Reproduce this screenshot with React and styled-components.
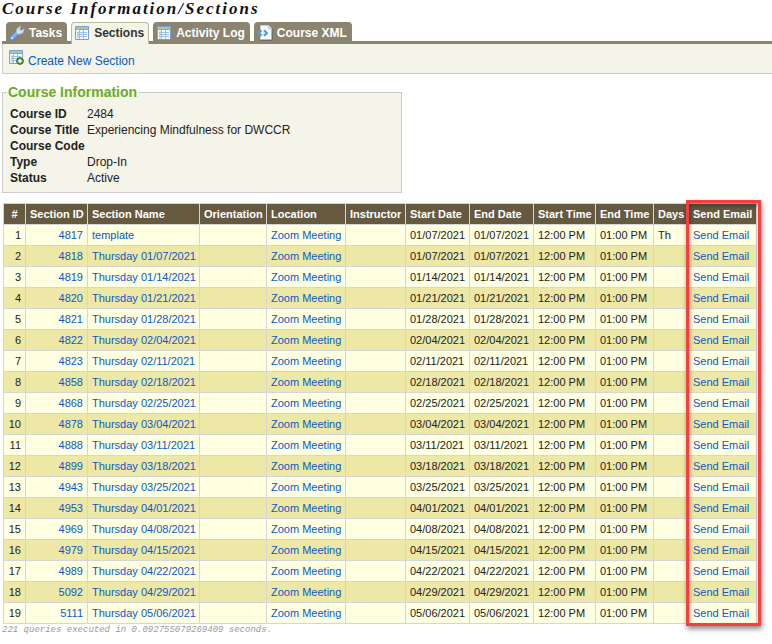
import React from 'react';
import styled, { createGlobalStyle } from 'styled-components';

const tabs = [
  { id: 'tasks', label: 'Tasks', icon: 'wrench' },
  { id: 'sections', label: 'Sections', icon: 'table', active: true },
  { id: 'log', label: 'Activity Log', icon: 'table' },
  { id: 'xml', label: 'Course XML', icon: 'xml' },
];

const courseInfo = [
  ['Course ID', '2484'],
  ['Course Title', 'Experiencing Mindfulness for DWCCR'],
  ['Course Code', ''],
  ['Type', 'Drop-In'],
  ['Status', 'Active'],
];

const columns = [
  { label: '#', width: 22, align: 'center' },
  { label: 'Section ID', width: 62 },
  { label: 'Section Name', width: 112 },
  { label: 'Orientation', width: 67 },
  { label: 'Location', width: 79 },
  { label: 'Instructor', width: 60 },
  { label: 'Start Date', width: 64 },
  { label: 'End Date', width: 64 },
  { label: 'Start Time', width: 62 },
  { label: 'End Time', width: 58 },
  { label: 'Days', width: 35 },
  { label: 'Send Email', width: 68 },
];
const tableWidth = columns.reduce((sum, column) => sum + column.width, 1);

const sections = [
  { id: 4817, name: 'template', date: '01/07/2021', days: 'Th' },
  { id: 4818, date: '01/07/2021' },
  { id: 4819, date: '01/14/2021' },
  { id: 4820, date: '01/21/2021' },
  { id: 4821, date: '01/28/2021' },
  { id: 4822, date: '02/04/2021' },
  { id: 4823, date: '02/11/2021' },
  { id: 4858, date: '02/18/2021' },
  { id: 4868, date: '02/25/2021' },
  { id: 4878, date: '03/04/2021' },
  { id: 4888, date: '03/11/2021' },
  { id: 4899, date: '03/18/2021' },
  { id: 4943, date: '03/25/2021' },
  { id: 4953, date: '04/01/2021' },
  { id: 4969, date: '04/08/2021' },
  { id: 4979, date: '04/15/2021' },
  { id: 4989, date: '04/22/2021' },
  { id: 5092, date: '04/29/2021' },
  { id: 5111, date: '05/06/2021' },
];

const TableShape = () => (
  <>
    <path d="M1.5 1.5h13v13h-13z" fill="#f7fbff" stroke="#7c9fd3" />
    <path d="M2 2h12v2H2z" fill="#a4cba4" />
    <path d="M2 4h12v1H2z" fill="#7fa8d8" />
    <path d="M3 6h2v8H3z" fill="#d2e3f7" />
    <path
      d="M3 7.5h10M3 9.5h10M3 11.5h10M5.5 5v9M9.5 5v9"
      stroke="#9fbee6"
    />
  </>
);

const shapes = {
  table: <TableShape />,
  tableAdd: (
    <>
      <TableShape />
      <circle cx="12" cy="12" r="3.4" fill="#5b9a3b" stroke="#37752a" />
      <path d="M12 10v4M10 12h4" stroke="#fff" strokeWidth="1.4" />
    </>
  ),
  wrench: (
    <>
      <path
        d="M3 13 7.6 8.4"
        stroke="#4c80c8"
        strokeWidth="5"
        strokeLinecap="round"
      />
      <path
        d="M3 13 7.6 8.4"
        stroke="#86b2f2"
        strokeWidth="3.4"
        strokeLinecap="round"
      />
      <path
        d="M7 7.2 8 3.5 11.2 1l.7.5-1.2 2.4 1.4 1.5L14.7 4l.6.7-1.4 3.2-3.4 1.4-1.7.1z"
        fill="#d5e1ef"
        stroke="#8faad0"
        strokeWidth=".7"
      />
      <circle cx="3" cy="13" r=".8" fill="#fff" />
    </>
  ),
  xml: (
    <>
      <path d="M3.5.5h8l3 3v11h-11z" fill="#f8fafd" stroke="#c6ccd4" />
      <path d="M11.5.5v3h3" fill="#dce4ed" stroke="#b9c1cc" />
      <path d="M15.3 4v11.3H3" stroke="#66665c" />
      <path
        d="M4.5 5.2 1.7 8l2.8 2.8M7 5.2 9.8 8 7 10.8"
        stroke="#4b9aed"
        strokeWidth="2.2"
      />
    </>
  ),
};

const Icon = ({ name }) => (
  <StyledIcon viewBox="0 0 16 16" fill="none" aria-hidden="true">
    {shapes[name]}
  </StyledIcon>
);

const SectionRow = ({ section, number }) => (
  <tr>
    <Cell $align="right">{number}</Cell>
    <Cell $align="right">
      <Link href={`#section-${section.id}`}>{section.id}</Link>
    </Cell>
    <Cell>
      <Link href={`#section-${section.id}`}>
        {section.name || `Thursday ${section.date}`}
      </Link>
    </Cell>
    <Cell />
    <Cell>
      <Link href="#location">Zoom Meeting</Link>
    </Cell>
    <Cell />
    <Cell>{section.date}</Cell>
    <Cell>{section.date}</Cell>
    <Cell>12:00 PM</Cell>
    <Cell>01:00 PM</Cell>
    <Cell>{section.days}</Cell>
    <Cell>
      <Link href={`#email-${section.id}`}>Send Email</Link>
    </Cell>
  </tr>
);

const App = () => {
  return (
    <>
      <GlobalStyle />
      <Page>
        <Title>Course Information/Sections</Title>
        <TabBar>
          {tabs.map(tab => (
            <Tab
              key={tab.id}
              href={`#${tab.id}`}
              $active={tab.active}
              aria-current={tab.active ? 'page' : undefined}
            >
              <Icon name={tab.icon} />
              {tab.label}
            </Tab>
          ))}
        </TabBar>
        <Toolbar>
          <ToolLink href="#new-section">
            <Icon name="tableAdd" />
            <span>Create New Section</span>
          </ToolLink>
        </Toolbar>

        <InfoBox>
          <Legend>Course Information</Legend>
          <InfoList>
            {courseInfo.map(([label, value]) => (
              <React.Fragment key={label}>
                <dt>{label}</dt>
                <dd>{value}</dd>
              </React.Fragment>
            ))}
          </InfoList>
        </InfoBox>

        <TableWrap>
          <Table>
            <colgroup>
              {columns.map(column => (
                <Col key={column.label} $width={column.width} />
              ))}
            </colgroup>
            <thead>
              <tr>
                {columns.map(column => (
                  <HeadCell
                    key={column.label}
                    scope="col"
                    $align={column.align}
                  >
                    {column.label}
                  </HeadCell>
                ))}
              </tr>
            </thead>
            <tbody>
              {sections.map((section, index) => (
                <SectionRow
                  key={section.id}
                  section={section}
                  number={index + 1}
                />
              ))}
            </tbody>
          </Table>
          <Highlight />
        </TableWrap>
        <QueryInfo>221 queries executed in 0.092755079269409 seconds.</QueryInfo>
      </Page>
    </>
  );
};

const GlobalStyle = createGlobalStyle`
  * {
    box-sizing: border-box;
  }
  body {
    margin: 0;
    background-color: #ffffff;
    color: #222222;
    font-family: 'Liberation Sans', Arial, sans-serif;
    font-size: 12px;
  }
`;

const Page = styled.main`
  padding-left: 2px;
`;

const Title = styled.h1`
  margin: 0;
  padding-bottom: 4px;
  font-family: 'Liberation Serif', 'Times New Roman', serif;
  font-size: 17px;
  font-style: italic;
  line-height: 18px;
  letter-spacing: 2px;
  color: #111111;
`;

const StyledIcon = styled.svg`
  width: 16px;
  height: 16px;
  flex: none;
`;

const TabBar = styled.nav`
  display: flex;
  gap: 4px;
  padding-left: 4px;
  border-bottom: 3px solid #8b856f;
`;

const Tab = styled.a`
  display: flex;
  align-items: center;
  gap: 4px;
  height: ${props => (props.$active ? '22px' : '19px')};
  margin-bottom: ${props => (props.$active ? '-3px' : '0')};
  padding: 2px 4px ${props => (props.$active ? '3px' : '0')} 2px;
  border: 1px solid ${props => (props.$active ? '#b9bd96' : '#8b856f')};
  border-bottom: 0;
  border-radius: 4px 4px 0 0;
  background-color: ${props => (props.$active ? '#f4f4e8' : '#8b856f')};
  color: ${props => (props.$active ? '#333333' : '#ffffff')};
  font-size: 12px;
  font-weight: bold;
  text-decoration: none;
  white-space: nowrap;
`;

const Toolbar = styled.div`
  padding: 5px;
  height: 30px;
  border: 1px solid #cccccc;
  border-width: 0 0 1px 1px;
  background-color: #f4f4e8;
`;

const Link = styled.a`
  color: #0b59c9;
  text-decoration: none;
  &:hover {
    text-decoration: underline;
  }
`;

const ToolLink = styled(Link)`
  display: flex;
  gap: 4px;
  line-height: 24px;
`;

const InfoBox = styled.fieldset`
  max-width: 400px;
  margin: 10px 0 0;
  padding: 6px 7px;
  border: 1px solid #cccccc;
  background-color: #f4f4e8;
`;

const Legend = styled.legend`
  margin-left: -3px;
  padding: 0 2px 0 1px;
  color: #6aac2b;
  font-size: 14px;
  font-weight: bold;
  line-height: 16px;
`;

const InfoList = styled.dl`
  display: grid;
  grid-template-columns: 77px 1fr;
  margin: 0;
  line-height: 16px;

  dt {
    font-weight: bold;
    white-space: nowrap;
  }
  dd {
    min-height: 16px;
    margin: 0;
  }
`;

const TableWrap = styled.div`
  position: relative;
  width: ${tableWidth}px;
  margin: 10px 0 0 1px;
`;

const Table = styled.table`
  width: 100%;
  table-layout: fixed;
  border-collapse: collapse;
  font-size: 11px;

  tbody tr:nth-child(odd) {
    background-color: #ffffe2;
  }
  tbody tr:nth-child(even) {
    background-color: #eee8a6;
  }
`;

const Col = styled.col`
  width: ${props => props.$width}px;
`;

const Cell = styled.td`
  height: 21px;
  padding: 0 4px;
  border: 1px solid #d6d6d6;
  text-align: ${props => props.$align || 'left'};
  white-space: nowrap;
`;

const HeadCell = styled(Cell).attrs({ as: 'th' })`
  background-color: #655a40;
  color: #ffffff;
`;

// Red frame round the Send Email column
const Highlight = styled.div`
  position: absolute;
  top: -3px;
  right: -4px;
  bottom: -2px;
  width: 75px;
  border: 3px solid #f93e3e;
  box-shadow: 1px 3px 5px rgba(0, 0, 0, 0.45),
    inset 1px 3px 4px rgba(0, 0, 0, 0.35);
  pointer-events: none;
`;

const QueryInfo = styled.p`
  margin: 0;
  color: #999999;
  font-family: 'Liberation Mono', 'Courier New', monospace;
  font-size: 9px;
  font-style: italic;
  line-height: 12px;
`;

export default App;
